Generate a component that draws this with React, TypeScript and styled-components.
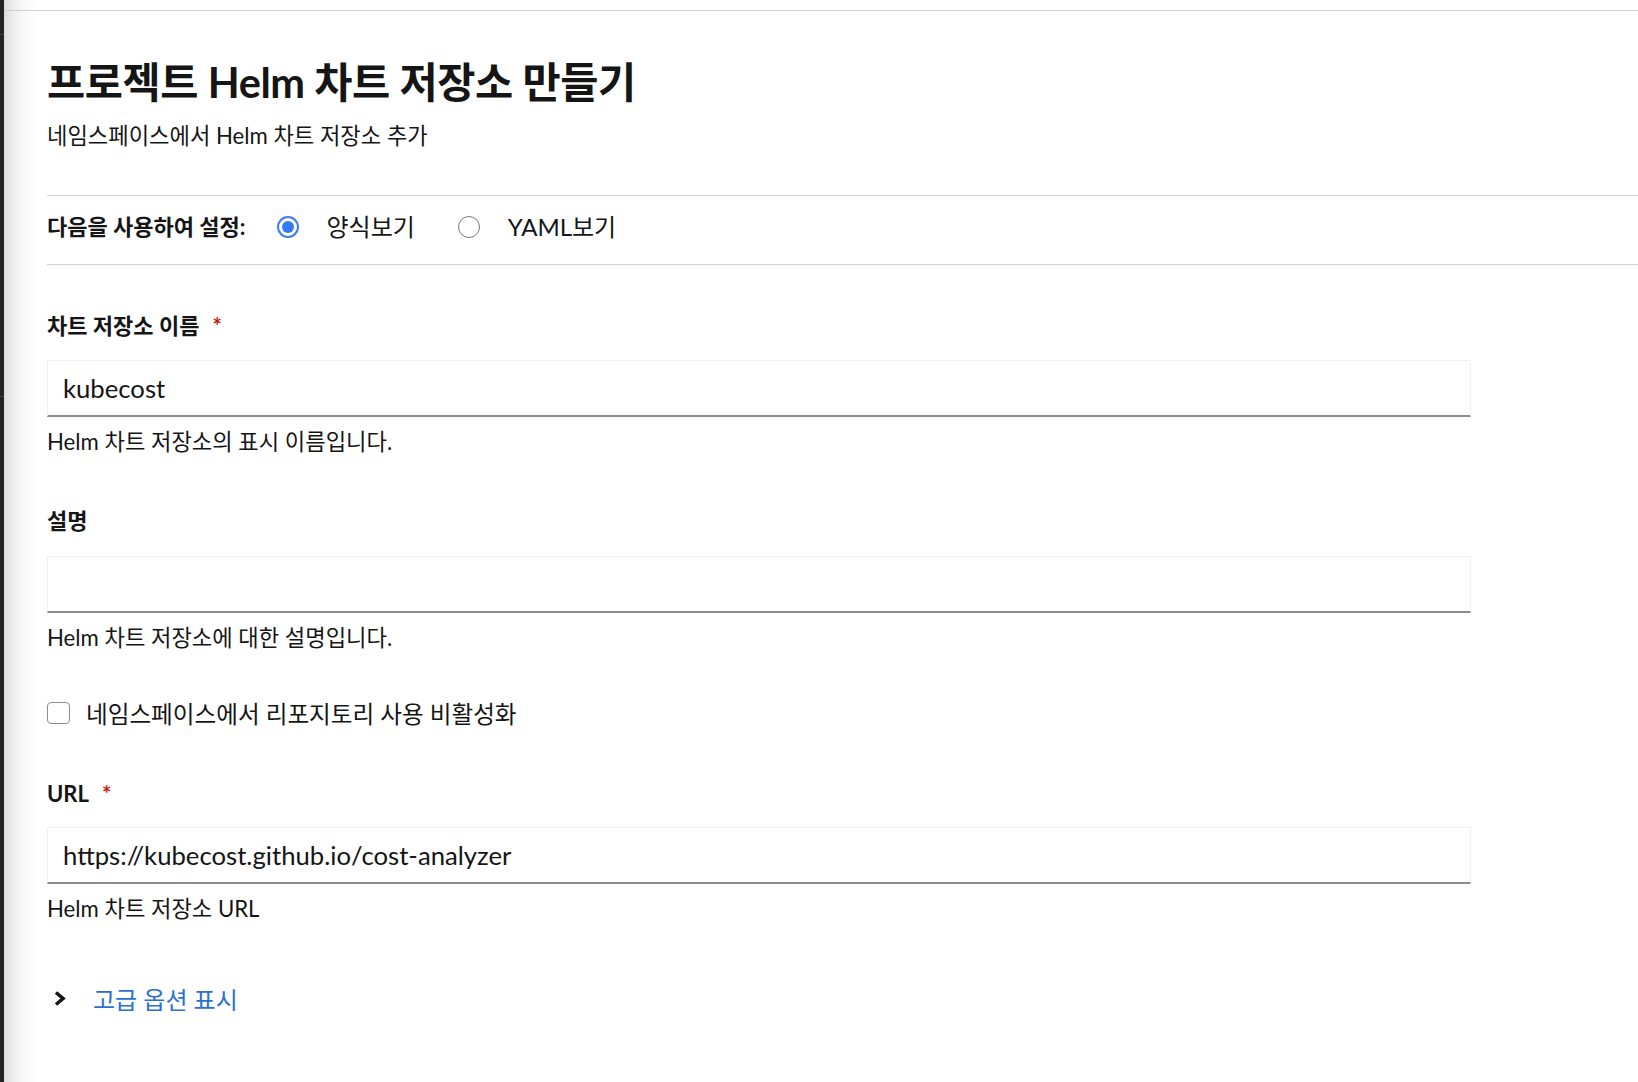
import React, { useState } from 'react';
import styled, { createGlobalStyle } from 'styled-components';

const GlobalStyle = createGlobalStyle`
  html, body {
    margin: 0;
    padding: 0;
    background: #fff;
  }
  body {
    font-family: Lato, 'Noto Sans CJK KR', sans-serif;
    color: #151515;
  }
  * {
    box-sizing: border-box;
  }
`;

const Shell = styled.div`
  display: flex;
  min-height: 100vh;
`;

const NavRail = styled.div`
  width: 4px;
  flex: none;
  background-color: #212427;
  display: flex;
  flex-direction: column;
`;

const RailSeparator = styled.div<{ $top: number }>`
  height: 1px;
  margin-top: ${props => props.$top}px;
  background-color: #3c3f42;
`;

const Main = styled.main`
  flex: 1;
  background: linear-gradient(to right, #dcdcdc 0, #efefef 10px, #fafafa 22px, #fff 34px);
`;

const TopStrip = styled.div`
  height: 11px;
  border-bottom: 1px solid #d2d2d2;
`;

const Page = styled.div`
  padding-left: 43px;
`;

const Title = styled.h1`
  margin: 47px 0 0;
  font-size: 41.5px;
  line-height: 48px;
  font-weight: 700;
  letter-spacing: -0.01em;
  color: #151515;
`;

const Subtitle = styled.p`
  margin: 15px 0 0;
  font-size: 22.2px;
  line-height: 30px;
  color: #151515;
`;

const Divider = styled.hr<{ $top?: number }>`
  margin: ${props => props.$top ?? 0}px 0 0;
  border: none;
  border-top: 1px solid #d2d2d2;
  height: 0;
`;

const ConfigRow = styled.div`
  display: flex;
  align-items: center;
  height: 68px;
  padding: 16px 0 22px;
`;

const ConfigLabel = styled.span`
  font-size: 22px;
  line-height: 30px;
  font-weight: 700;
  margin-right: 31px;
`;

const RadioOption = styled.label`
  display: flex;
  align-items: center;
  gap: 28px;
  font-size: 24px;
  line-height: 30px;
  margin-right: 43px;
  cursor: pointer;
`;

const RadioCircle = styled.span<{ $checked: boolean }>`
  width: 22px;
  height: 22px;
  border-radius: 50%;
  border: ${props => props.$checked ? '2px solid #3d7ef5' : '1.5px solid #7a7a7a'};
  display: flex;
  align-items: center;
  justify-content: center;
  background: #fff;

  &::after {
    content: '';
    width: 12px;
    height: 12px;
    border-radius: 50%;
    background: ${props => props.$checked ? '#3478f6' : 'transparent'};
  }
`;

const Form = styled.div`
  width: 1424px;
`;

const Field = styled.div<{ $top: number }>`
  margin-top: ${props => props.$top}px;
`;

const Label = styled.div`
  font-size: 22px;
  line-height: 30px;
  font-weight: 700;
`;

const Required = styled.span`
  color: #c9190b;
  margin-left: 13px;
  font-weight: 700;
`;

const TextInput = styled.input<{ $top: number }>`
  display: block;
  width: 100%;
  height: 57px;
  margin-top: ${props => props.$top}px;
  padding: 0 15px;
  border: 1px solid #f0f0f0;
  border-bottom: 2px solid #8a8d90;
  background: #fff;
  font-family: Lato, 'Noto Sans CJK KR', sans-serif;
  font-size: 25.7px;
  color: #151515;
  outline: none;
`;

const Helper = styled.div`
  margin-top: 10px;
  font-size: 22.2px;
  line-height: 30px;
  color: #151515;
`;

const CheckRow = styled.label<{ $top: number }>`
  display: flex;
  align-items: center;
  gap: 16px;
  height: 30px;
  margin-top: ${props => props.$top}px;
  font-size: 23.6px;
  cursor: pointer;
`;

const CheckBox = styled.span`
  width: 23px;
  height: 22px;
  border: 1.5px solid #8a8d90;
  border-radius: 4px;
  background: #fff;
`;

const ExpandToggle = styled.button`
  display: flex;
  align-items: center;
  gap: 27px;
  height: 30px;
  margin-top: 59px;
  padding: 0 0 0 6px;
  border: none;
  background: none;
  font-family: Lato, 'Noto Sans CJK KR', sans-serif;
  font-size: 24px;
  color: #2b6fd3;
  cursor: pointer;

  svg {
    flex: none;
  }
`;

export default function App() {
  const [mode, setMode] = useState<'form' | 'yaml'>('form');
  const [name, setName] = useState('kubecost');
  const [desc, setDesc] = useState('');
  const [url, setUrl] = useState('https://kubecost.github.io/cost-analyzer');

  return (
    <Shell>
      <GlobalStyle />
      <NavRail>
        <RailSeparator $top={34} />
        <RailSeparator $top={361} />
      </NavRail>
      <Main>
        <TopStrip />
        <Page>
          <Title>프로젝트 Helm 차트 저장소 만들기</Title>
          <Subtitle>네임스페이스에서 Helm 차트 저장소 추가</Subtitle>
          <Divider $top={44} />
          <ConfigRow>
            <ConfigLabel>다음을 사용하여 설정:</ConfigLabel>
            <RadioOption onClick={() => setMode('form')}>
              <RadioCircle $checked={mode === 'form'} />
              양식보기
            </RadioOption>
            <RadioOption onClick={() => setMode('yaml')}>
              <RadioCircle $checked={mode === 'yaml'} />
              YAML보기
            </RadioOption>
          </ConfigRow>
          <Divider />
          <Form>
            <Field $top={46}>
              <Label>
                차트 저장소 이름<Required>*</Required>
              </Label>
              <TextInput $top={19} value={name} onChange={e => setName(e.target.value)} />
              <Helper>Helm 차트 저장소의 표시 이름입니다.</Helper>
            </Field>
            <Field $top={49}>
              <Label>설명</Label>
              <TextInput $top={20} value={desc} onChange={e => setDesc(e.target.value)} />
              <Helper>Helm 차트 저장소에 대한 설명입니다.</Helper>
            </Field>
            <CheckRow $top={45}>
              <CheckBox />
              네임스페이스에서 리포지토리 사용 비활성화
            </CheckRow>
            <Field $top={51}>
              <Label>
                URL<Required>*</Required>
              </Label>
              <TextInput $top={18} value={url} onChange={e => setUrl(e.target.value)} />
              <Helper>Helm 차트 저장소 URL</Helper>
            </Field>
            <ExpandToggle>
              <svg width="13" height="15" viewBox="0 0 13 15">
                <path d="M3 1.5 L10 7.5 L3 13.5" fill="none" stroke="#151515" strokeWidth="3.6" strokeLinejoin="miter" />
              </svg>
              고급 옵션 표시
            </ExpandToggle>
          </Form>
        </Page>
      </Main>
    </Shell>
  );
}
